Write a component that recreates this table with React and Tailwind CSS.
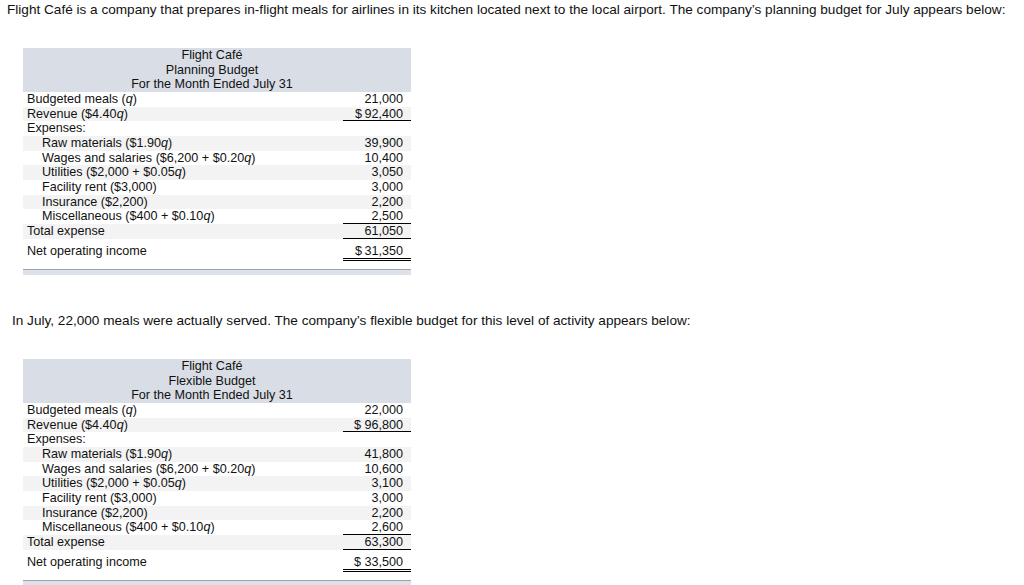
import React from "react";

const Q = () => <i>q</i>;

function Row({ label, value, indent, shade, border }) {
  return (
    <div className={`flex h-[14.67px] leading-[14.67px] ${shade ? "bg-[#f3f3f3]" : "bg-white"}`}>
      <div className={`flex-1 whitespace-nowrap ${indent ? "pl-[19px]" : "pl-[4px]"}`}>{label}</div>
      <div className={`w-[68px] text-right pr-[8px] whitespace-nowrap ${border ? "border-b border-black" : ""}`}>{value}</div>
    </div>
  );
}

function Budget({ title, v }) {
  return (
    <div className="ml-[23px] w-[388px] text-[12.6px] text-[#111]">
      <div className="bg-[#d9dde5] pr-[10px] text-center leading-[14.67px] h-[44px]">
        <div>Flight Café</div>
        <div>{title}</div>
        <div>For the Month Ended July 31</div>
      </div>
      <Row label={<>Budgeted meals (<Q />)</>} value={v[0]} />
      <Row label={<>Revenue ($4.40<Q />)</>} value={v[1]} shade border />
      <Row label="Expenses:" value="" />
      <Row label={<>Raw materials ($1.90<Q />)</>} value={v[2]} indent shade />
      <Row label={<>Wages and salaries ($6,200 + $0.20<Q />)</>} value={v[3]} indent />
      <Row label={<>Utilities ($2,000 + $0.05<Q />)</>} value={v[4]} indent shade />
      <Row label="Facility rent ($3,000)" value={v[5]} indent />
      <Row label="Insurance ($2,200)" value={v[6]} indent shade />
      <Row label={<>Miscellaneous ($400 + $0.10<Q />)</>} value={v[7]} indent border />
      <Row label="Total expense" value={v[8]} shade border />
      <div className="flex h-[22.5px] bg-white">
        <div className="flex-1 pl-[4px] pt-[5px] leading-[14.67px]">Net operating income</div>
        <div className="w-[68px] text-right pr-[8px] pt-[5px] leading-[14.67px] border-b-[3px] border-double border-black">{v[9]}</div>
      </div>
      <div className="mt-[8px] h-[6px] border-t border-[#9ea3ab] bg-[#dde1e8]" />
    </div>
  );
}

export default function App() {
  return (
    <div className="w-[1024px] h-[585px] overflow-hidden bg-white text-[#111]" style={{ fontFamily: '"Liberation Sans", Arial, sans-serif' }}>
      <p className="pl-[7px] pt-[2px] text-[13.6px] leading-[16px] whitespace-nowrap">
        Flight Café is a company that prepares in-flight meals for airlines in its kitchen located next to the local airport. The company’s planning budget for July appears below:
      </p>
      <div className="mt-[30px]">
        <Budget
          title="Planning Budget"
          v={["21,000", "$\u200992,400", "39,900", "10,400", "3,050", "3,000", "2,200", "2,500", "61,050", "$\u200931,350"]}
        />
      </div>
      <p className="pl-[12px] mt-[38px] text-[13.6px] leading-[16px] whitespace-nowrap">
        In July, 22,000 meals were actually served. The company’s flexible budget for this level of activity appears below:
      </p>
      <div className="mt-[30px]">
        <Budget
          title="Flexible Budget"
          v={["22,000", "$ 96,800", "41,800", "10,600", "3,100", "3,000", "2,200", "2,600", "63,300", "$ 33,500"]}
        />
      </div>
    </div>
  );
}
